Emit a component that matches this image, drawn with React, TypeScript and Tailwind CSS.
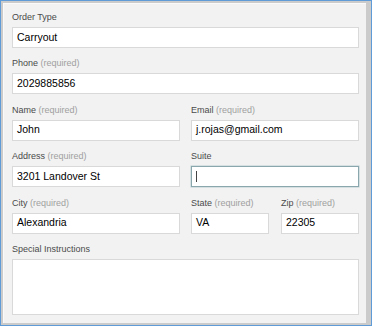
import React from "react";

const font = { fontFamily: '"Liberation Sans", Arial, sans-serif' };

function Label({ text, req }: { text: string; req?: boolean }) {
  return (
    <div className="h-[12px] leading-[12px] text-[9px] text-[#4a4a4a] whitespace-nowrap">
      {text}
      {req && <span className="text-[#a0a0a0]"> (required)</span>}
    </div>
  );
}

function Input({ value, focused }: { value?: string; focused?: boolean }) {
  return (
    <div
      className={
        "h-[21px] bg-white border flex items-center px-[4px] text-[10.5px] text-[#000000] " +
        (focused ? "border-[#8aa7ae] shadow-[0_0_0_0.5px_#b9cdd2]" : "border-[#d9d9d9]")
      }
    >
      {focused ? <span className="w-px h-[11px] bg-[#444444]" /> : value}
    </div>
  );
}

function Field({ label, req, value, focused }: { label: string; req?: boolean; value?: string; focused?: boolean }) {
  return (
    <div className="flex flex-col gap-[4px]">
      <Label text={label} req={req} />
      <Input value={value} focused={focused} />
    </div>
  );
}

export default function App() {
  return (
    <div className="w-[372px] h-[326px] bg-[#5f9bd6] p-px" style={font}>
      <div className="w-full h-full bg-[#cbcbcb] pl-[2px] pt-[2px] pr-[5px] pb-[2px]">
        <div className="w-full h-full bg-[#f2f2f2] border-t border-l border-[#fafafa] pl-[8px] pr-[7px] pt-[7px] flex flex-col gap-[9.4px]">
          <Field label="Order Type" value="Carryout" />
          <Field label="Phone" req value="2029885856" />
          <div className="grid grid-cols-2 gap-x-[11px]">
            <Field label="Name" req value="John" />
            <Field label="Email" req value="j.rojas@gmail.com" />
          </div>
          <div className="grid grid-cols-2 gap-x-[11px]">
            <Field label="Address" req value="3201 Landover St" />
            <Field label="Suite" focused />
          </div>
          <div className="grid grid-cols-2 gap-x-[11px]">
            <Field label="City" req value="Alexandria" />
            <div className="grid grid-cols-2 gap-x-[12px]">
              <Field label="State" req value="VA" />
              <Field label="Zip" req value="22305" />
            </div>
          </div>
          <div className="flex flex-col gap-[4px]">
            <Label text="Special Instructions" />
            <div className="h-[56px] bg-white border border-[#d9d9d9]" />
          </div>
        </div>
      </div>
    </div>
  );
}
